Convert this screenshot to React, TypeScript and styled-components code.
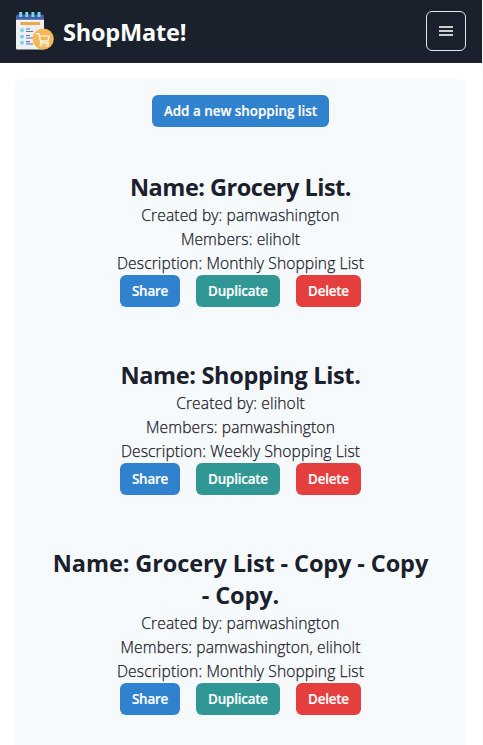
import React from 'react';
import styled, { createGlobalStyle } from 'styled-components';

const GlobalStyle = createGlobalStyle`
  *, *::before, *::after { box-sizing: border-box; }
  html { background: #fff; overflow: hidden; }
  body {
    margin: 0;
    font-family: 'Open Sans', 'Noto Sans', sans-serif;
    color: #1a202c;
  }
  h1, h2, p { margin: 0; }
`;

const Page = styled.div`
  height: 745px;
  overflow: hidden;
  border-right: 1px solid #f7f7f7;
`;

const Header = styled.header`
  display: flex;
  align-items: center;
  height: 63px;
  padding: 0 16px 1px 15px;
  background: #1a202c;
`;

const Logo = styled.svg`
  width: 40px;
  height: 40px;
  flex: none;
`;

const Brand = styled.h1`
  margin-left: 8px;
  padding-top: 2px;
  color: #fff;
  font-size: 23.5px;
  font-weight: 700;
  line-height: 32px;
  letter-spacing: -0.2px;
`;

const MenuButton = styled.button`
  display: flex;
  align-items: center;
  justify-content: center;
  width: 40px;
  height: 40px;
  margin-left: auto;
  padding: 0;
  border: 1px solid #e2e8f0;
  border-radius: 6px;
  background: transparent;
`;

const Panel = styled.main`
  display: flex;
  flex-direction: column;
  align-items: center;
  margin: 16px 16px 0 15px;
  padding: 16px 32px 52px;
  border-radius: 6px;
  background: #f7fafc;
`;

const tones = { blue: '#3182ce', teal: '#319795', red: '#e53e3e' };

const Button = styled.button<{ $tone: keyof typeof tones; $width: number; $tracking?: number }>`
  width: ${(p) => p.$width}px;
  height: 32px;
  padding: 0 0 1px;
  border: 0;
  border-radius: 6px;
  background: ${(p) => tones[p.$tone]};
  color: #fff;
  font: 600 13.4px/20px 'Open Sans', 'Noto Sans', sans-serif;
  letter-spacing: ${(p) => p.$tracking ?? -0.2}px;
  -webkit-text-stroke: 0.2px currentColor;
  white-space: nowrap;
`;

const Lists = styled.div`
  display: flex;
  flex-direction: column;
  gap: 52px;
  margin-top: 44px;
`;

const ListCard = styled.section`
  text-align: center;
`;

const Title = styled.h2<{ $tracking: number }>`
  font-size: 23.5px;
  font-weight: 700;
  line-height: 32px;
  letter-spacing: ${(p) => p.$tracking}px;
`;

const Detail = styled.p`
  font-size: 15.6px;
  font-weight: 300;
  line-height: 24px;
  letter-spacing: 0.11px;
  -webkit-text-stroke: 0.25px currentColor;
`;

const Actions = styled.div`
  display: flex;
  justify-content: center;
  gap: 16px;
`;

const lists = [
  { name: 'Grocery List', owner: 'pamwashington', members: 'eliholt', description: 'Monthly Shopping List', tracking: -0.5 },
  { name: 'Shopping List', owner: 'eliholt', members: 'pamwashington', description: 'Weekly Shopping List', tracking: -0.33 },
  { name: 'Grocery List - Copy - Copy - Copy', owner: 'pamwashington', members: 'pamwashington, eliholt', description: 'Monthly Shopping List', tracking: -0.11 },
];

function ShopLogo() {
  return (
    <Logo viewBox="0 0 40 40" aria-hidden="true">
      <path d="M1 5h28v33.500H2a1 1 0 0 1-1-1z" fill="#edeff1" />
      <path d="M1 5.500a2 2 0 0 1 2-2h24a2 2 0 0 1 2 2V8.700H1z" fill="#4460a8" />
      <path d="M5.700 1v5M11.800 1v5M17.900 1v5M24 1v5" stroke="#77d5ee" strokeWidth="3" />
      <path d="M5.500 12.500H25" stroke="#e9a84c" strokeWidth="3" />
      <g fill="#72d4ec">
        <circle cx="7" cy="19.200" r="2" />
        <circle cx="7" cy="25.700" r="2" />
        <circle cx="7" cy="31.800" r="2" />
      </g>
      <path d="M11 18h4M11 20.500h7M11 24.500h4M11 27h7M11 30.700h4M11 33h7" stroke="#5c74b0" strokeWidth="1.200" />
      <circle cx="28.200" cy="28" r="10.600" fill="#f6b756" />
      <path d="M21 22.700h2.800l2.100 9.200h8.100M24.500 25h9.700l-1.200 4.800h-7.500" fill="none" stroke="#fff" strokeWidth="1.200" />
      <circle cx="26.300" cy="34.200" r="1.200" fill="none" stroke="#fff" />
      <circle cx="32.300" cy="34.200" r="1.200" fill="none" stroke="#fff" />
    </Logo>
  );
}

export default function App() {
  return (
    <Page>
      <GlobalStyle />
      <Header>
        <ShopLogo />
        <Brand>ShopMate!</Brand>
        <MenuButton aria-label="Open menu">
          <svg width="14" height="10" viewBox="0 0 14 10" aria-hidden="true">
            <path d="M0 1h14M0 5h14M0 9h14" stroke="#cbcdd1" strokeWidth="2" />
          </svg>
        </MenuButton>
      </Header>
      <Panel>
        <Button $tone="blue" $width={177} $tracking={0}>Add a new shopping list</Button>
        <Lists>
          {lists.map((list) => (
            <ListCard key={list.name}>
              <Title $tracking={list.tracking}>Name: {list.name}.</Title>
              <Detail>Created by: {list.owner}</Detail>
              <Detail>Members: {list.members}</Detail>
              <Detail>Description: {list.description}</Detail>
              <Actions>
                <Button $tone="blue" $width={60}>Share</Button>
                <Button $tone="teal" $width={84}>Duplicate</Button>
                <Button $tone="red" $width={65}>Delete</Button>
              </Actions>
            </ListCard>
          ))}
        </Lists>
      </Panel>
    </Page>
  );
}
